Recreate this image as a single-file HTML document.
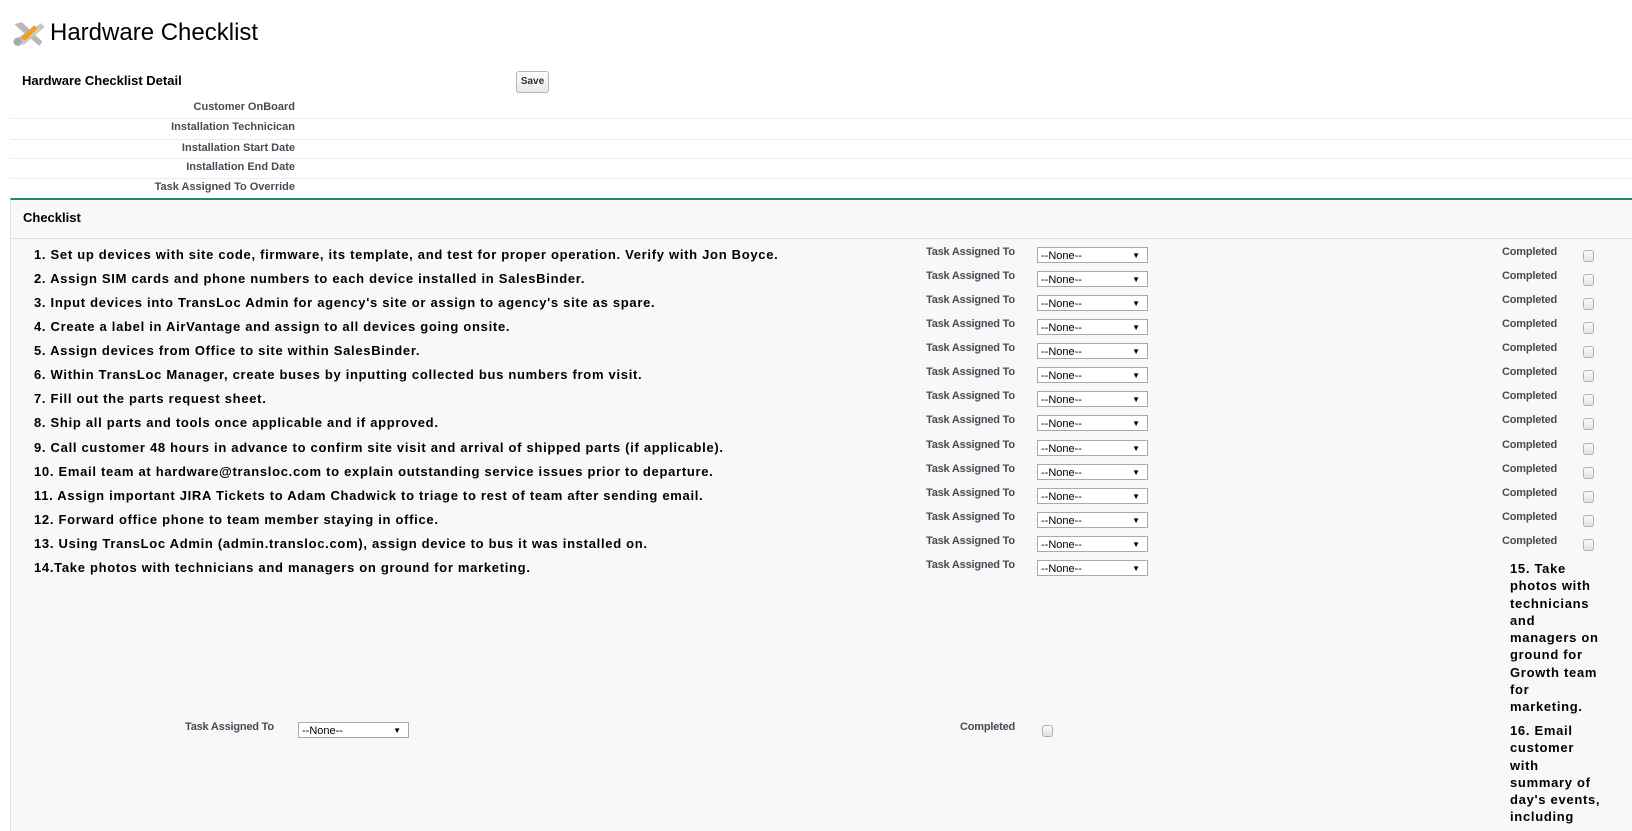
<!DOCTYPE html>
<html><head><meta charset="utf-8"><style>
*{margin:0;padding:0;box-sizing:border-box}
body{width:1632px;height:821px;overflow:hidden;background:#fff;font-family:"Liberation Sans",Arial,sans-serif;position:relative;color:#000}
.a{position:absolute;white-space:nowrap}
.h1{left:50px;top:19px;font-size:24px;color:#000}
.dl{font-size:11px;font-weight:bold;color:#4a4a56;text-align:right}
.sep{position:absolute;left:10px;right:0;height:1px;background:#ececec}
.panel{position:absolute;left:10px;top:198px;right:0;bottom:-10px;background:#f8f8f8;border-top:2px solid #1f8a7a;border-left:1px solid #e0e0e0}
.item{font-size:13px;font-weight:bold;letter-spacing:0.7px;color:#000}
.lab{font-size:11px;font-weight:bold;color:#4a4a56;letter-spacing:-0.2px}
.sel{position:absolute;width:111px;height:16px;background:#fff;border:1px solid #a9a9a9;font-size:11px;padding:2px 0 0 3px;line-height:12px}
.sel:after{content:"\25BC";position:absolute;right:7px;top:2px;font-size:8px}
.cb{position:absolute;width:11px;height:12px;border:1px solid #b0b0b0;border-radius:3px;background:linear-gradient(#fbfbfb,#e2e2e2)}
.col{position:absolute;left:1510px;width:94px;font-size:13px;font-weight:bold;letter-spacing:0.7px;line-height:17.3px;white-space:normal}
</style></head><body>
<svg class="a" style="left:11px;top:19px" width="36" height="29" viewBox="0 0 34 28"><path d="M3 5 L10 3 L30 22 L27 26 L8 10 Z" fill="#b8b8b8"/><path d="M29 4 L32 8 L12 25 L5 24 L6 18 Z" fill="#c9c9c9"/><path d="M9 18 L22 6 L25 9 L13 21 Z" fill="#f0a020"/><circle cx="6" cy="22" r="4" fill="#aaa"/></svg>
<div class="a h1">Hardware Checklist</div>
<div class="a" style="left:22px;top:73px;font-size:13px;font-weight:bold">Hardware Checklist Detail</div>
<div class="a" style="left:516px;top:71px;width:33px;height:22px;border:1px solid #b5b5b5;border-radius:3px;background:linear-gradient(#fff,#e8e8e8);font-size:10px;font-weight:bold;text-align:center;line-height:20px;color:#333">Save</div>
<div class="a dl" style="top:101px;left:0;width:295px">Customer OnBoard</div>
<div class="sep" style="top:118px"></div>
<div class="a dl" style="top:121px;left:0;width:295px">Installation Technicican</div>
<div class="sep" style="top:139px"></div>
<div class="a dl" style="top:142px;left:0;width:295px">Installation Start Date</div>
<div class="sep" style="top:158px"></div>
<div class="a dl" style="top:161px;left:0;width:295px">Installation End Date</div>
<div class="sep" style="top:178px"></div>
<div class="a dl" style="top:181px;left:0;width:295px">Task Assigned To Override</div>
<div class="panel"></div>
<div class="a" style="left:23px;top:210px;font-size:13px;font-weight:bold">Checklist</div>
<div style="position:absolute;left:11px;right:0;top:238px;height:1px;background:#dcdcdc"></div>
<div id="rows"></div>
<script>
var items=["1. Set up devices with site code, firmware, its template, and test for proper operation. Verify with Jon Boyce.",
"2. Assign SIM cards and phone numbers to each device installed in SalesBinder.",
"3. Input devices into TransLoc Admin for agency's site or assign to agency's site as spare.",
"4. Create a label in AirVantage and assign to all devices going onsite.",
"5. Assign devices from Office to site within SalesBinder.",
"6. Within TransLoc Manager, create buses by inputting collected bus numbers from visit.",
"7. Fill out the parts request sheet.",
"8. Ship all parts and tools once applicable and if approved.",
"9. Call customer 48 hours in advance to confirm site visit and arrival of shipped parts (if applicable).",
"10. Email team at hardware@transloc.com to explain outstanding service issues prior to departure.",
"11. Assign important JIRA Tickets to Adam Chadwick to triage to rest of team after sending email.",
"12. Forward office phone to team member staying in office.",
"13. Using TransLoc Admin (admin.transloc.com), assign device to bus it was installed on.",
"14.Take photos with technicians and managers on ground for marketing."];
var h='';for(var i=0;i<14;i++){var y=247+i*24.07;
h+='<div class="a item" style="left:34px;top:'+(y)+'px">'+items[i]+'</div>';
h+='<div class="a lab" style="left:926px;top:'+(y-1)+'px">Task Assigned To</div><div class="sel" style="left:1037px;top:'+y+'px">--None--</div>';
if(i<13)h+='<div class="a lab" style="left:1502px;top:'+(y-1)+'px">Completed</div><div class="cb" style="left:1583px;top:'+(y+3)+'px"></div>';}
document.getElementById('rows').innerHTML=h;
</script>
<div class="col" style="top:560px">15. Take photos with technicians and managers on ground for Growth team for marketing.</div>
<div class="a lab" style="left:185px;top:721px">Task Assigned To</div>
<div class="sel" style="left:298px;top:722px">--None--</div>
<div class="a lab" style="left:960px;top:721px">Completed</div>
<div class="cb" style="left:1042px;top:725px"></div>
<div class="col" style="top:722px">16. Email customer with summary of day's events, including</div>
</body></html>
